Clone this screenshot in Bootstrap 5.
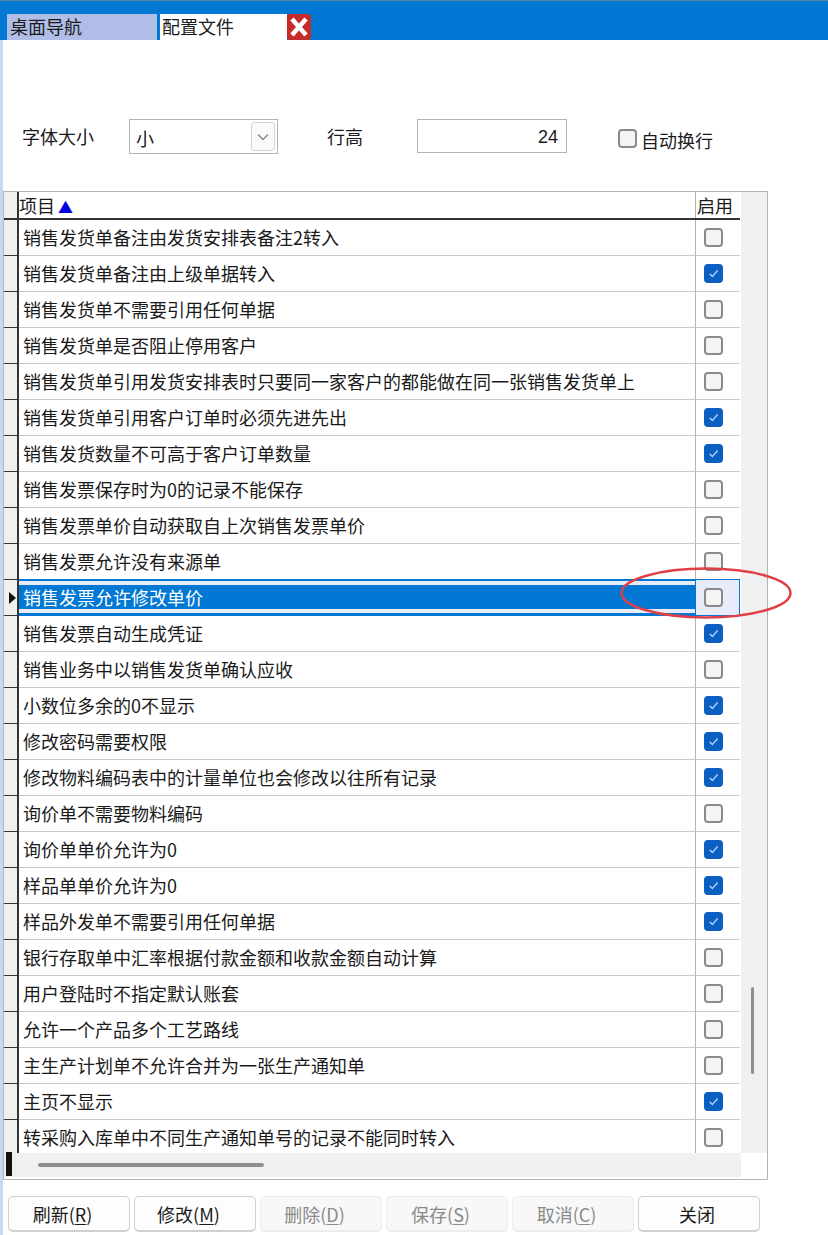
<!DOCTYPE html>
<html lang="zh-CN">
  <head>
    <meta charset="UTF-8" />
    <meta name="viewport" content="width=device-width, initial-scale=1.0" />
    <title>配置文件</title>
    <link rel="stylesheet" href="https://cdn.jsdelivr.net/npm/bootstrap@5.3.3/dist/css/bootstrap.min.css" />
    <style>
      body {
        width: 828px;
        height: 1235px;
        overflow: hidden;
        font-family: "Noto Sans CJK SC", "Liberation Sans", sans-serif;
        font-size: 18px;
        line-height: 24px;
        color: #1a1a1a;
        background: #fff;
        position: relative;
      }
      .tabbar {
        height: 40px;
        padding: 13px 0 0 7px;
        background: #0078d4;
        border-top: 1px solid #5f7f9c;
      }
      .tab-nav { width: 150px; height: 26px; background: #b0bde6; padding-left: 3px; margin-right: 3px; }
      .tab-cfg { width: 127px; height: 26px; background: #fff; padding-left: 2px; }
      .tab-close { width: 24px; height: 26px; border-radius: 3px; background: #c62c2c; }
      .workspace { border-left: 3px solid #c5daf0; height: 1195px; }
      .toolrow { height: 151px; padding-top: 79px; }
      .tool-label { width: 126px; padding-left: 19px; height: 35px; line-height: 34px; }
      .tool-select {
        width: 149px; height: 35px; border: 1px solid #b4b4b4; padding-left: 6px; line-height: 36px;
      }
      .tool-arrow {
        width: 24px; height: 29px; margin: 2px; border: 1px solid #d4d4d4; border-radius: 3px; background: #fafafa;
      }
      .tool-height { width: 139px; height: 35px; padding-left: 49px; line-height: 34px; }
      .tool-input {
        width: 150px; height: 34px; border: 1px solid #b4b4b4; padding-right: 8px; line-height: 34px; text-align: right;
        font-family: "Liberation Sans", sans-serif; font-size: 18px;
      }
      .auto-wrap { padding: 10px 0 0 51px; line-height: 22px; gap: 4px; }
      .grid-box {
        width: 765px; height: 989px; border: 1px solid #b4b4b4; background: #fff; position: relative;
      }
      .grid-main { width: 736px; }
      .grid-side { width: 26px; height: 961px; background: #f0f0f0; margin-left: 1px; position: relative; }
      .vthumb { position: absolute; left: 10px; top: 795px; width: 3px; height: 87px; background: #8f8f8f; border-radius: 2px; }
      .grow { height: 36px; }
      .grow.head { height: 28px; border-bottom: 2px solid #333; }
      .ind {
        width: 15px; flex: none; background: #f0f0f0; border-right: 2px solid #333; border-bottom: 1px solid #333;
        position: relative;
      }
      .head .ind { border-bottom: 0; }
      .cell-name {
        flex: 1; padding-left: 4px; line-height: 35px; border-bottom: 1px solid #c8c8c8; white-space: nowrap;
      }
      .cell-on {
        width: 45px; flex: none; padding-left: 8px; border-left: 1px solid #b4b4b4; border-bottom: 1px solid #c8c8c8;
      }
      .head .cell-name { padding-left: 0; line-height: 26px; border-bottom: 0; }
      .head .cell-on { border-bottom: 0; line-height: 26px; padding-left: 1px; }
      .sort-up { color: #0000e0; font-size: 15px; margin-left: 3px; }
      .grid-rows { height: 933px; overflow: hidden; }
      .grow.picked .cell-name {
        color: #fff;
        background: linear-gradient(#0078d4 0 2px, #e8ecf8 2px 6px, #0078d4 6px 30px, #e8ecf8 30px 34px, #0078d4 34px);
        border-bottom: 0;
        height: 37px;
        line-height: 36px;
        margin-top: -1px;
      }
      .grow.picked .cell-on { background: #e8ecfa; border: 1px solid #0078d4; margin-top: -1px; height: 37px; padding-left: 8px; }
      .row-mark {
        position: absolute; left: 5px; top: 12px; width: 0; height: 0;
        border-left: 7px solid #111; border-top: 6px solid transparent; border-bottom: 6px solid transparent;
      }
      .hbar { height: 24px; width: 737px; background: #f0f0f0; position: relative; }
      .hmark { position: absolute; left: 2px; top: -1px; width: 6px; height: 24px; background: #111; }
      .hthumb { position: absolute; left: 34px; top: 10px; width: 226px; height: 4px; background: #8f8f8f; border-radius: 2px; }
      .form-check-input.tick {
        width: 19px; height: 19px; margin: 0; flex: none; border: 2px solid #8a8a8a; border-radius: 4px; background-color: #f4f4f4;
      }
      .form-check-input.tick:checked {
        border-color: #0a5fc0; background-color: #0a5fc0;
        background-image: url("data:image/svg+xml,%3csvg xmlns='http://www.w3.org/2000/svg' viewBox='0 0 20 20'%3e%3cpath fill='none' stroke='%23a9cdf5' stroke-width='2' d='M5 10.5l3.5 3.5 7-8'/%3e%3c/svg%3e");
      }
      .btnrow { padding: 16px 0 0 5px; gap: 4px; }
      .btn.act {
        width: 122px; height: 36px; padding: 0 13px 0 0; font-size: 18px; line-height: 34px; color: #1a1a1a; background: #fdfdfd;
        border: 1px solid #cfcfcf; border-bottom-width: 2px; border-radius: 5px;
      }
      .btn.act.plain { padding-right: 4px; }
      .btn.act:disabled { color: #8a8a8a; background: #f8f8f8; border-color: #ececec; opacity: 1; }
      .btn.act u { text-underline-offset: 2px; }
      .callout { position: absolute; left: 620px; top: 567px; pointer-events: none; }
    </style>
  </head>
  <body>
    <header class="tabbar d-flex">
      <div class="tab-nav">桌面导航</div>
      <div class="tab-cfg">配置文件</div>
      <div class="tab-close d-flex align-items-center justify-content-center">
        <svg width="18" height="20" viewBox="0 0 18 20"><path d="M2 2l14 16M16 2L2 18" stroke="#fff" stroke-width="4.5" /></svg>
      </div>
    </header>

    <main class="workspace">
      <div class="toolrow d-flex">
        <div class="tool-label">字体大小</div>
        <div class="tool-select d-flex justify-content-between">
          <span>小</span>
          <span class="tool-arrow d-flex align-items-center justify-content-center">
            <svg width="12" height="8" viewBox="0 0 12 8"><path d="M1 1.5l5 5 5-5" fill="none" stroke="#8a8a8a" stroke-width="1.4" /></svg>
          </span>
        </div>
        <div class="tool-height">行高</div>
        <div class="tool-input">24</div>
        <label class="auto-wrap d-flex align-items-start">
          <input class="form-check-input tick" type="checkbox" />自动换行
        </label>
      </div>

      <section class="grid-box d-flex flex-wrap align-content-start">
        <div class="grid-main">
          <div class="grow head d-flex">
            <div class="ind"></div>
            <div class="cell-name">项目<span class="sort-up">▲</span></div>
            <div class="cell-on">启用</div>
          </div>
          <div class="grid-rows" id="rows"></div>
        </div>
        <div class="grid-side"><div class="vthumb"></div></div>
        <div class="hbar"><div class="hmark"></div><div class="hthumb"></div></div>
      </section>

      <div class="btnrow d-flex">
        <button class="btn act" type="button">刷新(<u>R</u>)</button>
        <button class="btn act" type="button">修改(<u>M</u>)</button>
        <button class="btn act" type="button" disabled>删除(<u>D</u>)</button>
        <button class="btn act" type="button" disabled>保存(<u>S</u>)</button>
        <button class="btn act" type="button" disabled>取消(<u>C</u>)</button>
        <button class="btn act plain" type="button">关闭</button>
      </div>
    </main>

    <svg class="callout" width="174" height="54" viewBox="0 0 174 54">
      <ellipse cx="86" cy="26" rx="84.5" ry="24.5" fill="none" stroke="#e04045" stroke-width="2.5" />
    </svg>

    <script src="https://cdn.jsdelivr.net/npm/bootstrap@5.3.3/dist/js/bootstrap.bundle.min.js"></script>
    <script>
      const items = [
        ["销售发货单备注由发货安排表备注2转入", 0],
        ["销售发货单备注由上级单据转入", 1],
        ["销售发货单不需要引用任何单据", 0],
        ["销售发货单是否阻止停用客户", 0],
        ["销售发货单引用发货安排表时只要同一家客户的都能做在同一张销售发货单上", 0],
        ["销售发货单引用客户订单时必须先进先出", 1],
        ["销售发货数量不可高于客户订单数量", 1],
        ["销售发票保存时为0的记录不能保存", 0],
        ["销售发票单价自动获取自上次销售发票单价", 0],
        ["销售发票允许没有来源单", 0],
        ["销售发票允许修改单价", 0],
        ["销售发票自动生成凭证", 1],
        ["销售业务中以销售发货单确认应收", 0],
        ["小数位多余的0不显示", 1],
        ["修改密码需要权限", 1],
        ["修改物料编码表中的计量单位也会修改以往所有记录", 1],
        ["询价单不需要物料编码", 0],
        ["询价单单价允许为0", 1],
        ["样品单单价允许为0", 1],
        ["样品外发单不需要引用任何单据", 1],
        ["银行存取单中汇率根据付款金额和收款金额自动计算", 0],
        ["用户登陆时不指定默认账套", 0],
        ["允许一个产品多个工艺路线", 0],
        ["主生产计划单不允许合并为一张生产通知单", 0],
        ["主页不显示", 1],
        ["转采购入库单中不同生产通知单号的记录不能同时转入", 0],
      ];
      const pickedRow = 10;
      document.getElementById("rows").innerHTML = items
        .map(([name, on], i) => `
          <div class="grow d-flex ${i == pickedRow ? "picked" : ""}">
            <div class="ind">${i == pickedRow ? '<span class="row-mark"></span>' : ""}</div>
            <div class="cell-name">${name}</div>
            <div class="cell-on d-flex align-items-center">
              <input class="form-check-input tick" type="checkbox" ${on ? "checked" : ""} />
            </div>
          </div>`)
        .join("");
    </script>
  </body>
</html>
